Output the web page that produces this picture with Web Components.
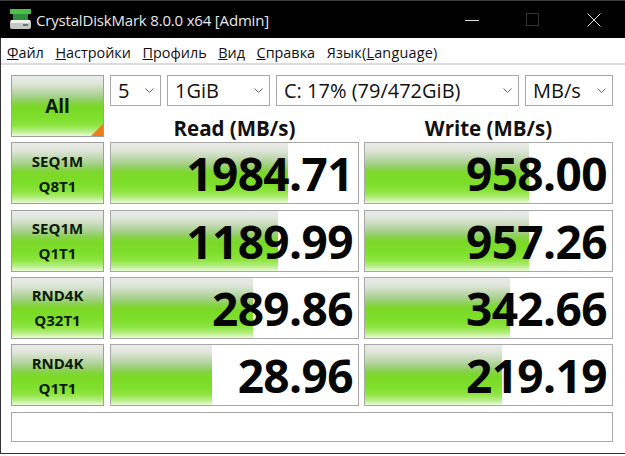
<!DOCTYPE html>
<html>
<head>
<meta charset="utf-8">
<title>CrystalDiskMark</title>
<style>
html, body { margin: 0; padding: 0; background: #fff; }
body { width: 625px; height: 456px; overflow: hidden; font-family: "Open Sans", "Noto Sans", sans-serif; }
</style>
</head>
<body>
<cdm-window>
  <title-bar slot="title">CrystalDiskMark 8.0.0 x64 [Admin]</title-bar>
  <menu-bar slot="menu"></menu-bar>
  <test-button class="all" slot="all" big arrow>All</test-button>
  <combo-box slot="c1" value="5"></combo-box>
  <combo-box slot="c2" value="1GiB"></combo-box>
  <combo-box slot="c3" value="C: 17% (79/472GiB)"></combo-box>
  <combo-box slot="c4" value="MB/s"></combo-box>
  <col-head slot="h1">Read (MB/s)</col-head>
  <col-head slot="h2">Write (MB/s)</col-head>
  <result-row slot="rows" a="SEQ1M" b="Q8T1" read="1984.71" rfill="177" write="958.00" wfill="164"></result-row>
  <result-row slot="rows" a="SEQ1M" b="Q1T1" read="1189.99" rfill="167" write="957.26" wfill="164"></result-row>
  <result-row slot="rows" a="RND4K" b="Q32T1" read="289.86" rfill="142" write="342.66" wfill="145"></result-row>
  <result-row slot="rows" a="RND4K" b="Q1T1" read="28.96" rfill="101" write="219.19" wfill="137"></result-row>
  <status-box slot="status"></status-box>
</cdm-window>
<script>
const GRADIENT = "linear-gradient(180deg,#e9ebe9 0%,#dfe6da 12%,#c0d8b0 25%,#a0d080 36%,#88d24a 44%,#7ad924 52%,#7fdf2d 70%,#8ee540 82%,#b8ee88 92%,#eafbd8 100%)";

class CdmWindow extends HTMLElement {
    constructor() {
        super();
        this.attachShadow({ mode: "open" }).innerHTML = `
            <style>
                :host { display: block; width: 625px; height: 456px; overflow: hidden; }
                .frame { height: 416px; box-sizing: border-box; border-left: 1px solid #333; border-bottom: 1px solid #333; display: flex; flex-direction: column; }
                .main { padding: 10.3px 12px 0 10px; display: grid; grid-template-columns: 93px 1fr; column-gap: 6px; }
                .top { display: grid; grid-template-columns: 51px 103px 243px 88px; column-gap: 6px; grid-template-rows: 31px 31px; height: 62px; }
                .heads { grid-column: 1 / 5; display: grid; grid-template-columns: 249px 249px; column-gap: 5px; box-sizing: border-box; height: 31px; padding-top: 13px; }
                .rows { grid-column: 1 / 3; display: flex; flex-direction: column; gap: 5.3px; margin-top: 5px; }
                .status { grid-column: 1 / 3; margin-top: 6px; }
            </style>
            <slot name="title"></slot>
            <div class="frame">
                <slot name="menu"></slot>
                <div class="main">
                    <slot name="all"></slot>
                    <div class="top">
                        <slot name="c1"></slot><slot name="c2"></slot><slot name="c3"></slot><slot name="c4"></slot>
                        <div class="heads"><slot name="h1"></slot><slot name="h2"></slot></div>
                    </div>
                    <div class="rows"><slot name="rows"></slot></div>
                    <div class="status"><slot name="status"></slot></div>
                </div>
            </div>
        `;
    }
}

class TitleBar extends HTMLElement {
    constructor() {
        super();
        this.attachShadow({ mode: "open" }).innerHTML = `
            <style>
                :host { display: flex; align-items: center; height: 38px; box-sizing: border-box; border-top: 1px solid #3a3a3a; background: #000; color: #e8e8e8; font: 400 15px "Open Sans", sans-serif; }
                svg.logo { margin: 0 4px 0 10px; flex: none; }
                .text { flex: 1; white-space: nowrap; letter-spacing: -0.18px; }
                .btns { display: flex; align-items: center; padding-right: 1px; }
                .btns div { width: 61px; height: 37px; display: flex; align-items: center; justify-content: center; }
            </style>
            <svg class="logo" width="22" height="22" viewBox="0 0 22 22">
                <rect x="0" y="0" width="21" height="5" fill="#4cc04a"/>
                <rect x="3" y="5" width="15" height="6" fill="#2f8f3a"/>
                <rect x="0" y="11" width="21" height="9" rx="2" fill="#c4c8c4"/>
                <rect x="1" y="11" width="19" height="3" fill="#f0f2f0"/>
                <rect x="13" y="15" width="5" height="2" fill="#6a7a6a"/>
            </svg>
            <div class="text"><slot></slot></div>
            <div class="btns">
                <div><svg width="14" height="14"><path d="M0 7.5H14" stroke="#e0e0e0" stroke-width="1"/></svg></div>
                <div><svg width="14" height="14"><rect x="0.5" y="0.5" width="12" height="12" fill="none" stroke="#333"/></svg></div>
                <div><svg width="14" height="14"><path d="M0.5 0.5L13.5 13.5M13.5 0.5L0.5 13.5" stroke="#e0e0e0" stroke-width="1"/></svg></div>
            </div>
        `;
    }
}

class MenuBar extends HTMLElement {
    constructor() {
        super();
        const items = [["Ф", "айл"], ["Н", "астройки"], ["П", "рофиль"], ["В", "ид"], ["С", "правка"]];
        const html = items.map(([k, r]) => `<span><u>${k}</u>${r}</span>`).join("");
        this.attachShadow({ mode: "open" }).innerHTML = `
            <style>
                :host { display: flex; align-items: center; height: 27px; box-sizing: border-box; border-bottom: 2px solid #dcdcdc; padding: 3px 0 0 6px; gap: 11.6px; color: #111; font: 400 14.4px "Open Sans", sans-serif; white-space: nowrap; }
                .lang { letter-spacing: 0.2px; }
            </style>
            ${html}<span class="lang">Язык(<u>L</u>anguage)</span>
        `;
    }
}

class TestButton extends HTMLElement {
    constructor() {
        super();
        const big = this.hasAttribute("big");
        this.attachShadow({ mode: "open" }).innerHTML = `
            <style>
                :host { display: flex; flex-direction: column; align-items: center; justify-content: center; position: relative; box-sizing: border-box; width: 93px; height: 62px; padding-top: 1px; border: 1px solid #a0a0a0; background: ${GRADIENT}; color: #0c1a08; font: 700 ${big ? 19 : 15}px/25px "Open Sans", sans-serif; }
                .corner { position: absolute; right: 0; bottom: 0; width: 0; height: 0; border-left: 12px solid transparent; border-bottom: 12px solid #f07c1c; }
            </style>
            <slot></slot>
            ${this.hasAttribute("arrow") ? '<div class="corner"></div>' : ""}
        `;
    }
}

class ComboBox extends HTMLElement {
    constructor() {
        super();
        this.attachShadow({ mode: "open" }).innerHTML = `
            <style>
                :host { display: flex; align-items: center; justify-content: space-between; box-sizing: border-box; height: 31px; border: 1px solid #a8a8a8; background: #fff; padding: 0 6px 0 7px; color: #111; font: 400 20px "Open Sans", sans-serif; white-space: nowrap; }
            </style>
            <span>${this.getAttribute("value")}</span>
            <svg width="9" height="5" viewBox="0 0 9 5"><path d="M0.5 0.5L4.5 4.5L8.5 0.5" fill="none" stroke="#666" stroke-width="1"/></svg>
        `;
    }
}

class ColHead extends HTMLElement {
    constructor() {
        super();
        this.attachShadow({ mode: "open" }).innerHTML = `
            <style>
                :host { display: flex; justify-content: center; align-items: center; color: #111; font: 700 20.5px/18px "Open Sans", sans-serif; white-space: nowrap; }
            </style>
            <slot></slot>
        `;
    }
}

class ResultMeter extends HTMLElement {
    constructor() {
        super();
        this.attachShadow({ mode: "open" }).innerHTML = `
            <style>
                :host { display: block; position: relative; box-sizing: border-box; width: 249px; height: 62px; border: 1px solid #a8a8a8; background: #fff; overflow: hidden; }
                .fill { height: 100%; background: ${GRADIENT}; width: ${this.getAttribute("fill")}px; }
                .val { position: absolute; inset: 0 5px 0 0; display: flex; align-items: center; justify-content: flex-end; color: #060606; font: 700 46px "Open Sans", sans-serif; letter-spacing: -0.6px; }
            </style>
            <div class="fill"></div>
            <div class="val">${this.getAttribute("value")}</div>
        `;
    }
}

class ResultRow extends HTMLElement {
    constructor() {
        super();
        const a = n => this.getAttribute(n);
        this.attachShadow({ mode: "open" }).innerHTML = `
            <style>
                :host { display: grid; grid-template-columns: 93px 249px 249px; column-gap: 6px; }
                result-meter + result-meter { margin-left: -1px; }
            </style>
            <test-button><span>${a("a")}</span><span>${a("b")}</span></test-button>
            <result-meter value="${a("read")}" fill="${a("rfill")}"></result-meter>
            <result-meter value="${a("write")}" fill="${a("wfill")}"></result-meter>
        `;
    }
}

class StatusBox extends HTMLElement {
    constructor() {
        super();
        this.attachShadow({ mode: "open" }).innerHTML = `
            <style>
                :host { display: block; box-sizing: border-box; height: 30px; border: 1px solid #a8a8a8; background: #fff; }
            </style>
        `;
    }
}

customElements.define("test-button", TestButton);
customElements.define("result-meter", ResultMeter);
customElements.define("result-row", ResultRow);
customElements.define("combo-box", ComboBox);
customElements.define("col-head", ColHead);
customElements.define("status-box", StatusBox);
customElements.define("menu-bar", MenuBar);
customElements.define("title-bar", TitleBar);
customElements.define("cdm-window", CdmWindow);
</script>
</body>
</html>
